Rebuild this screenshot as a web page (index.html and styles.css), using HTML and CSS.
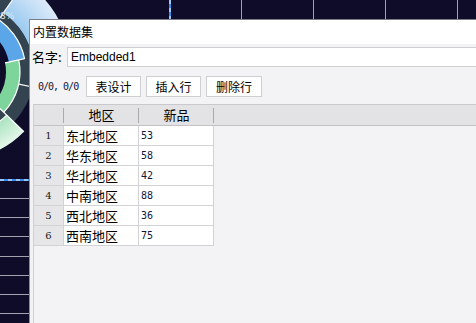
FILE: index.html
```html
<!DOCTYPE html>
<html lang="zh">
<head>
    <meta charset="UTF-8">
    <title>内置数据集</title>
    <link rel="stylesheet" href="styles.css">
</head>
<body>
  <svg class="backdrop" width="476" height="323" viewBox="0 0 476 323">
    <defs>
      <radialGradient id="skyFade" gradientUnits="userSpaceOnUse" cx="0" cy="0" r="110">
        <stop offset="0.66" stop-color="#9ccaf0"/>
        <stop offset="1" stop-color="#dcebf9"/>
      </radialGradient>
      <radialGradient id="mintFade" gradientUnits="userSpaceOnUse" cx="0" cy="0" r="86">
        <stop offset="0.72" stop-color="#a9e3bf"/>
        <stop offset="1" stop-color="#e4f6ea"/>
      </radialGradient>
    </defs>
    <!-- chart grid behind the dialog -->
    <g stroke="#a2a2b0" stroke-width="1">
      <line x1="241.5" y1="0" x2="241.5" y2="323"/>
      <line x1="313.5" y1="0" x2="313.5" y2="323"/>
      <line x1="385.5" y1="0" x2="385.5" y2="323"/>
      <line x1="457.5" y1="0" x2="457.5" y2="323"/>
      <line x1="0" y1="198.5" x2="476" y2="198.5"/>
      <line x1="0" y1="217.5" x2="476" y2="217.5"/>
      <line x1="0" y1="236.5" x2="476" y2="236.5"/>
      <line x1="0" y1="256.5" x2="476" y2="256.5"/>
      <line x1="0" y1="275.5" x2="476" y2="275.5"/>
      <line x1="0" y1="294.5" x2="476" y2="294.5"/>
      <line x1="0" y1="313.5" x2="476" y2="313.5"/>
    </g>
    <g>
      <line x1="170" y1="0" x2="170" y2="323" stroke="#3b8ef0" stroke-width="2"/>
      <line x1="170" y1="0" x2="170" y2="323" stroke="#fff" stroke-width="1" stroke-dasharray="4 4"/>
      <line x1="0" y1="180" x2="476" y2="180" stroke="#3b8ef0" stroke-width="2"/>
      <line x1="0" y1="180" x2="476" y2="180" stroke="#fff" stroke-width="1" stroke-dasharray="4 4"/>
    </g>
    <!-- donut -->
    <g transform="translate(-38 72)" fill="none">
      <circle r="77" stroke="#33434f" stroke-width="26" stroke-dasharray="100.8 483.8" transform="rotate(-130)"/>
      <circle r="91" stroke="url(#skyFade)" stroke-width="38" stroke-dasharray="103.2 571.8" transform="rotate(-55)"/>
      <circle r="65" stroke="#33434f" stroke-width="14" stroke-dasharray="112.3 408.4" transform="rotate(-55)"/>
      <circle r="74" stroke="url(#mintFade)" stroke-width="24" stroke-dasharray="111.1 465" transform="rotate(44)"/>
      <circle r="53" stroke="#33434f" stroke-width="18" stroke-dasharray="88.8 333" transform="rotate(44)"/>
      <circle r="56" stroke="#5aa6e8" stroke-width="16" stroke-dasharray="46.9 351.9" transform="rotate(-60)"/>
      <circle r="51" stroke="#7dd59b" stroke-width="14" stroke-dasharray="49.8 320.4" transform="rotate(-12)"/>
      <g stroke="#fff" stroke-width="1.2">
        <circle r="64" stroke-dasharray="53.6 402.1" transform="rotate(-60)"/>
        <circle r="58" stroke-dasharray="56.7 364.4" transform="rotate(-12)"/>
        <circle r="62" stroke-dasharray="93.1 389.6" transform="rotate(44)"/>
        <line x1="64" y1="0" x2="110" y2="0" transform="rotate(-55)"/>
        <line x1="44" y1="0" x2="64" y2="0" transform="rotate(-12)"/>
        <line x1="58" y1="0" x2="72" y2="0" transform="rotate(12)"/>
        <line x1="44" y1="0" x2="86" y2="0" transform="rotate(44)"/>
      </g>
    </g>
    <text x="0" y="19" class="pie-label">8%</text>
  </svg>

  <div class="dialog">
    <div class="dialog-title">内置数据集</div>

    <div class="name-row">
      <label class="name-label">名字:</label>
      <div class="name-input">Embedded1</div>
    </div>

    <div class="toolbar">
      <span class="pos">0/0, 0/0</span>
      <button class="btn">表设计</button>
      <button class="btn">插入行</button>
      <button class="btn btn-wide">删除行</button>
    </div>

    <div class="grid">
      <div class="grid-head">
        <div class="hcell hnum"></div>
        <div class="hcell">地区</div>
        <div class="hcell">新品</div>
      </div>
      <div class="grid-row"><div class="num">1</div><div class="cell">东北地区</div><div class="cell qty">53</div></div>
      <div class="grid-row"><div class="num">2</div><div class="cell">华东地区</div><div class="cell qty">58</div></div>
      <div class="grid-row"><div class="num">3</div><div class="cell">华北地区</div><div class="cell qty">42</div></div>
      <div class="grid-row"><div class="num">4</div><div class="cell">中南地区</div><div class="cell qty">88</div></div>
      <div class="grid-row"><div class="num">5</div><div class="cell">西北地区</div><div class="cell qty">36</div></div>
      <div class="grid-row"><div class="num">6</div><div class="cell">西南地区</div><div class="cell qty">75</div></div>
    </div>
  </div>
</body>
</html>
```

FILE: styles.css
```css
* {
  box-sizing: border-box;
}

body {
  margin: 0;
  width: 476px;
  height: 323px;
  overflow: hidden;
  position: relative;
  background-color: #0f0c29;
  font-family: "Noto Sans CJK SC", sans-serif;
  color: #000;
}

.backdrop {
  position: absolute;
  left: 0;
  top: 0;
  display: block;
}

.pie-label {
  font-family: "DejaVu Sans", sans-serif;
  font-size: 9px;
  fill: #dde7f2;
}

.dialog {
  position: absolute;
  left: 29px;
  top: 19px;
  right: 0;
  bottom: 0;
  display: flex;
  flex-direction: column;
  background-color: #f3f3f5;
  border-top: 1px solid #7c7c86;
  border-left: 1px solid #8a8a92;
}

.dialog-title {
  height: 24px;
  line-height: 24px;
  padding-left: 3px;
  font-size: 12px;
  background-color: #fff;
}

.name-row {
  display: flex;
  height: 20px;
  margin-top: 3px;
}

.name-label {
  width: 37px;
  padding-left: 2px;
  font-size: 13px;
  line-height: 20px;
}

.name-input {
  flex: 1;
  padding-left: 3px;
  background-color: #fff;
  border: 1px solid #d0d0d4;
  border-right: none;
  font: 12px "Liberation Sans", sans-serif;
  line-height: 18px;
}

.toolbar {
  display: flex;
  align-items: center;
  height: 21px;
  margin-top: 9px;
}

.pos {
  width: 48px;
  margin-left: 8px;
  font: 10px "DejaVu Sans Mono", monospace;
  letter-spacing: -1px;
  color: #141438;
}

.btn {
  width: 55px;
  height: 21px;
  margin-right: 5px;
  padding: 0;
  background-color: #fff;
  border: 1px solid #cfcfd3;
  font: 12px "Noto Sans CJK SC", sans-serif;
  color: #000;
}

.btn-wide {
  width: 56px;
}

.grid {
  flex: 1;
  margin: 7px 0 0 3px;
  border-left: 1px solid #cfcfd3;
}

.grid-head {
  display: flex;
  height: 22px;
  background-color: #e3e3e5;
  border-top: 1px solid #c9c9cd;
  border-bottom: 1px solid #c2c2c6;
}

.hcell {
  position: relative;
  width: 75px;
  text-align: center;
  font-size: 13px;
  line-height: 20px;
}

.hcell.hnum {
  width: 30px;
}

.hcell::after {
  content: "";
  position: absolute;
  right: 0;
  top: 3px;
  bottom: 2px;
  width: 1px;
  background-color: #a9a9ae;
}

.grid-row {
  display: flex;
  width: 180px;
  height: 20px;
  border-bottom: 1px solid #d3d3d7;
}

.num {
  width: 30px;
  background-color: #e6e6e8;
  border-right: 1px solid #d3d3d7;
  text-align: center;
  font: 10px "DejaVu Serif", serif;
  line-height: 19px;
  color: #1a1a1a;
}

.cell {
  width: 75px;
  padding-left: 2px;
  background-color: #fff;
  border-right: 1px solid #d3d3d7;
  font-size: 13px;
  line-height: 19px;
}

.cell.qty {
  padding-left: 2px;
  font: 10px "DejaVu Sans Mono", monospace;
  line-height: 19px;
  color: #141438;
}
```
